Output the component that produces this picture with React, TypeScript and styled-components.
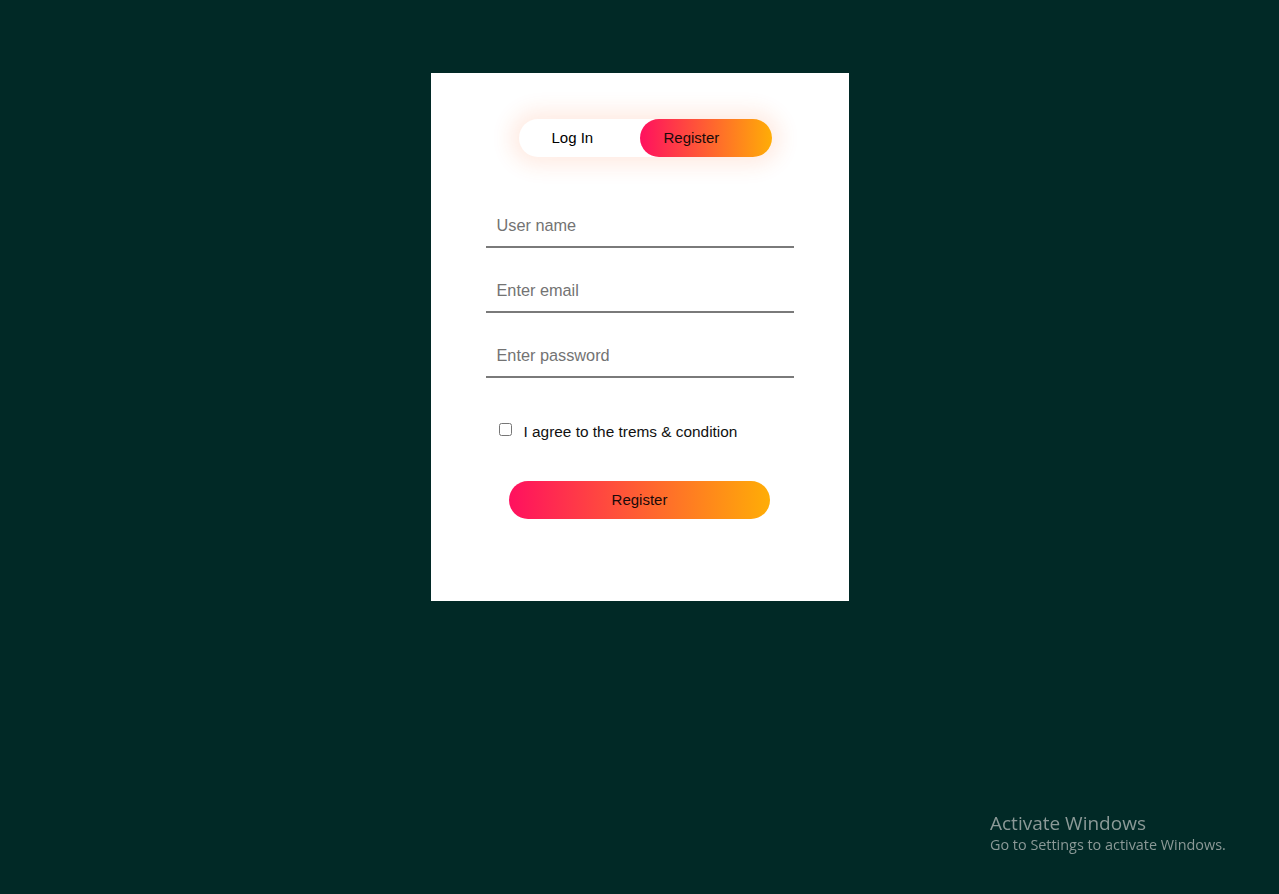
import React from "react";
import styled, { createGlobalStyle } from "styled-components";

const Global = createGlobalStyle`
  html, body { margin: 0; padding: 0; }
  body {
    background: #012926;
    min-height: 894px;
    font-family: "Liberation Sans", Arial, sans-serif;
  }
`;

const Page = styled.div`
  min-height: 894px;
  display: flex;
  justify-content: center;
  padding-top: 73px;
  box-sizing: border-box;
`;

const Card = styled.div`
  width: 418px;
  height: 528px;
  background: #fff;
  box-sizing: border-box;
  padding: 46px 55px 0;
  display: flex;
  flex-direction: column;
`;

const ToggleBox = styled.div`
  width: 253px;
  height: 38px;
  margin-left: 33px;
  display: flex;
  border-radius: 30px;
  box-shadow: 0 0 20px 9px #ff61241f;
`;

const ToggleBtn = styled.button<{ $active?: boolean; $w: number; $pl: number }>`
  width: ${(p) => p.$w}px;
  height: 38px;
  padding: 0 0 1px ${(p) => p.$pl}px;
  text-align: left;
  border: 0;
  border-radius: 30px;
  background: ${(p) => (p.$active ? "linear-gradient(to right, #ff105f, #ffad06)" : "transparent")};
  font-family: "Liberation Sans", Arial, sans-serif;
  font-size: 15px;
  color: ${(p) => (p.$active ? "#1a0a0a" : "#000")};
  cursor: pointer;
`;

const Form = styled.form`
  display: flex;
  flex-direction: column;
  margin-top: 51px;
  gap: 25px;
`;

const Field = styled.input`
  width: 100%;
  box-sizing: border-box;
  height: 40px;
  padding: 0 10px 4px 11px;
  border: 0;
  border-bottom: 2px solid #7a7a7a;
  outline: none;
  background: transparent;
  font-family: "Liberation Sans", Arial, sans-serif;
  font-size: 16.3px;
  color: #333;
  &::placeholder { color: #737373; }
`;

const CheckRow = styled.label`
  display: flex;
  align-items: center;
  margin: 19px 0 0 13px;
  height: 20px;
  font-size: 15.4px;
  color: #111;
  gap: 12px;
`;

const Check = styled.input`
  width: 13px;
  height: 13px;
  margin: -5px 0 0 0;
`;

const Submit = styled.button`
  width: 85%;
  align-self: center;
  height: 38px;
  margin-top: 14px;
  padding-bottom: 2px;
  border: 0;
  border-radius: 30px;
  background: linear-gradient(to right, #ff105f, #ffad06);
  font-family: "Liberation Sans", Arial, sans-serif;
  font-size: 15px;
  color: #1a0a0a;
  cursor: pointer;
`;

const Watermark = styled.div`
  position: fixed;
  left: 990px;
  top: 811px;
  font-family: "Open Sans", "Noto Sans", sans-serif;
  color: #8b9997;
`;

const WmTitle = styled.div`
  font-size: 19px;
  line-height: 24px;
`;

const WmSub = styled.div`
  font-size: 14.4px;
  line-height: 20px;
`;

export default function App() {
  return (
    <>
      <Global />
      <Page>
        <Card>
          <ToggleBox>
            <ToggleBtn type="button" $w={121} $pl={33}>Log In</ToggleBtn>
            <ToggleBtn type="button" $active $w={132} $pl={24}>Register</ToggleBtn>
          </ToggleBox>
          <Form onSubmit={(e) => e.preventDefault()}>
            <Field type="text" placeholder="User name" />
            <Field type="email" placeholder="Enter email" />
            <Field type="password" placeholder="Enter password" />
            <CheckRow>
              <Check type="checkbox" />
              <span>I agree to the trems &amp; condition</span>
            </CheckRow>
            <Submit type="submit">Register</Submit>
          </Form>
        </Card>
      </Page>
      <Watermark>
        <WmTitle>Activate Windows</WmTitle>
        <WmSub>Go to Settings to activate Windows.</WmSub>
      </Watermark>
    </>
  );
}
